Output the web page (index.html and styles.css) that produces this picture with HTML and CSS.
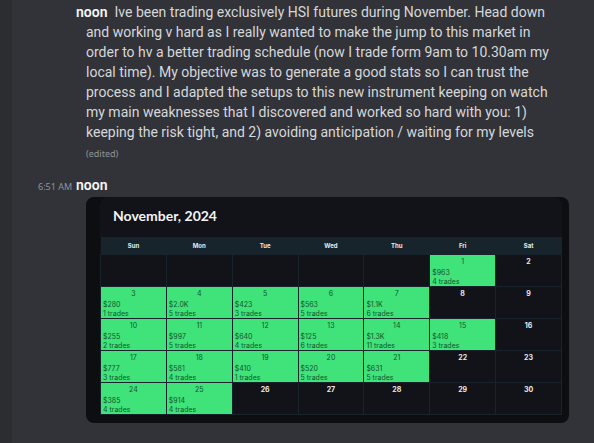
FILE: index.html
```html
<!DOCTYPE html>
<html lang="en">
<head>
    <meta charset="UTF-8">
    <title>Trading Chat</title>
    <link rel="stylesheet" href="styles.css">
</head>
<body>
    <div class="chat">
        <div class="message">
            <p class="text"><span class="name first">noon</span>Ive been trading exclusively HSI futures during November. Head down<br>
            and working v hard as I really wanted to make the jump to this market in<br>
            order to hv a better trading schedule (now I trade form 9am to 10.30am my<br>
            local time). My objective was to generate a good stats so I can trust the<br>
            process and I adapted the setups to this new instrument keeping on watch<br>
            my main weaknesses that I discovered and worked so hard with you: 1)<br>
            keeping the risk tight, and 2) avoiding anticipation / waiting for my levels</p>
            <div class="edited">(edited)</div>
        </div>
        <div class="message-head">
            <span class="time">6:51 AM</span>
            <span class="name">noon</span>
        </div>
        <div class="card">
            <div class="panel">
                <h2>November, 2024</h2>
                <table class="calendar">
                    <thead>
                        <tr><th>Sun</th><th>Mon</th><th>Tue</th><th>Wed</th><th>Thu</th><th>Fri</th><th>Sat</th></tr>
                    </thead>
                    <tbody>
                        <tr>
                            <td></td><td></td><td></td><td></td><td></td>
                            <td class="win"><b>1</b>$963<br>4 trades</td>
                            <td><b>2</b></td>
                        </tr>
                        <tr>
                            <td class="win"><b>3</b>$280<br>1 trades</td>
                            <td class="win"><b>4</b>$2.0K<br>5 trades</td>
                            <td class="win"><b>5</b>$423<br>3 trades</td>
                            <td class="win"><b>6</b>$563<br>5 trades</td>
                            <td class="win"><b>7</b>$1.1K<br>6 trades</td>
                            <td><b>8</b></td>
                            <td><b>9</b></td>
                        </tr>
                        <tr>
                            <td class="win"><b>10</b>$255<br>2 trades</td>
                            <td class="win"><b>11</b>$997<br>5 trades</td>
                            <td class="win"><b>12</b>$640<br>4 trades</td>
                            <td class="win"><b>13</b>$125<br>6 trades</td>
                            <td class="win"><b>14</b>$1.3K<br>11 trades</td>
                            <td class="win"><b>15</b>$418<br>3 trades</td>
                            <td><b>16</b></td>
                        </tr>
                        <tr>
                            <td class="win"><b>17</b>$777<br>3 trades</td>
                            <td class="win"><b>18</b>$581<br>4 trades</td>
                            <td class="win"><b>19</b>$410<br>1 trades</td>
                            <td class="win"><b>20</b>$520<br>5 trades</td>
                            <td class="win"><b>21</b>$631<br>5 trades</td>
                            <td><b>22</b></td>
                            <td><b>23</b></td>
                        </tr>
                        <tr>
                            <td class="win"><b>24</b>$385<br>4 trades</td>
                            <td class="win"><b>25</b>$914<br>4 trades</td>
                            <td><b>26</b></td>
                            <td><b>27</b></td>
                            <td><b>28</b></td>
                            <td><b>29</b></td>
                            <td><b>30</b></td>
                        </tr>
                    </tbody>
                </table>
            </div>
        </div>
    </div>
</body>
</html>
```
FILE: styles.css
```css
body {
    margin: 0;
    background-color: #323338;
    color: #d5d7db;
    font-family: Roboto, sans-serif;
    font-size: 14px;
    line-height: 20px;
}
.chat {
    box-sizing: border-box;
    min-height: 100vh;
    border-left: 12px solid #2b2d31;
    padding: 2px 25px 19px 26px;
}
.message {
    margin-left: 48px;
}
.text {
    margin: 0;
    text-indent: -10px;
    white-space: nowrap;
}
.name {
    color: #f5f6f8;
    font-weight: 600;
}
.first {
    margin-right: 7px;
}
.edited {
    margin-top: 2px;
    color: #90949c;
    font-family: "Noto Sans", sans-serif;
    font-size: 9px;
}
.message-head {
    display: flex;
    align-items: baseline;
    gap: 4px;
    margin-top: 11px;
}
.time {
    width: 34px;
    color: #90949c;
    font-family: "Noto Sans", sans-serif;
    font-size: 9px;
    white-space: nowrap;
}
.card {
    margin-left: 48px;
    padding: 0 7px 8px 14px;
    border-radius: 8px;
    background-color: #0d0e12;
}
.panel {
    border-radius: 8px 8px 0 0;
    background-color: #121318;
}
.card h2 {
    margin: 0;
    padding: 9px 13px 11px;
    color: #f2f3f5;
    font-family: Lato, sans-serif;
    font-size: 14px;
    font-weight: 700;
}
.calendar {
    width: 100%;
    table-layout: fixed;
    border-collapse: collapse;
    font-family: Inter, sans-serif;
    font-size: 7px;
    line-height: 9px;
}
.calendar th {
    height: 17px;
    padding: 0;
    background-color: #18242b;
    color: #e8eaec;
    font-size: 6px;
}
.calendar td {
    box-sizing: border-box;
    height: 32px;
    padding: 2px 2px 0;
    border: 1px solid #18242b;
    color: #e8eaec;
    vertical-align: top;
}
.calendar b {
    display: block;
    margin-bottom: 2px;
    text-align: center;
}
.calendar .win {
    background-color: #3fe37a;
    color: #12552d;
}
.win b {
    font-weight: 400;
}
```
